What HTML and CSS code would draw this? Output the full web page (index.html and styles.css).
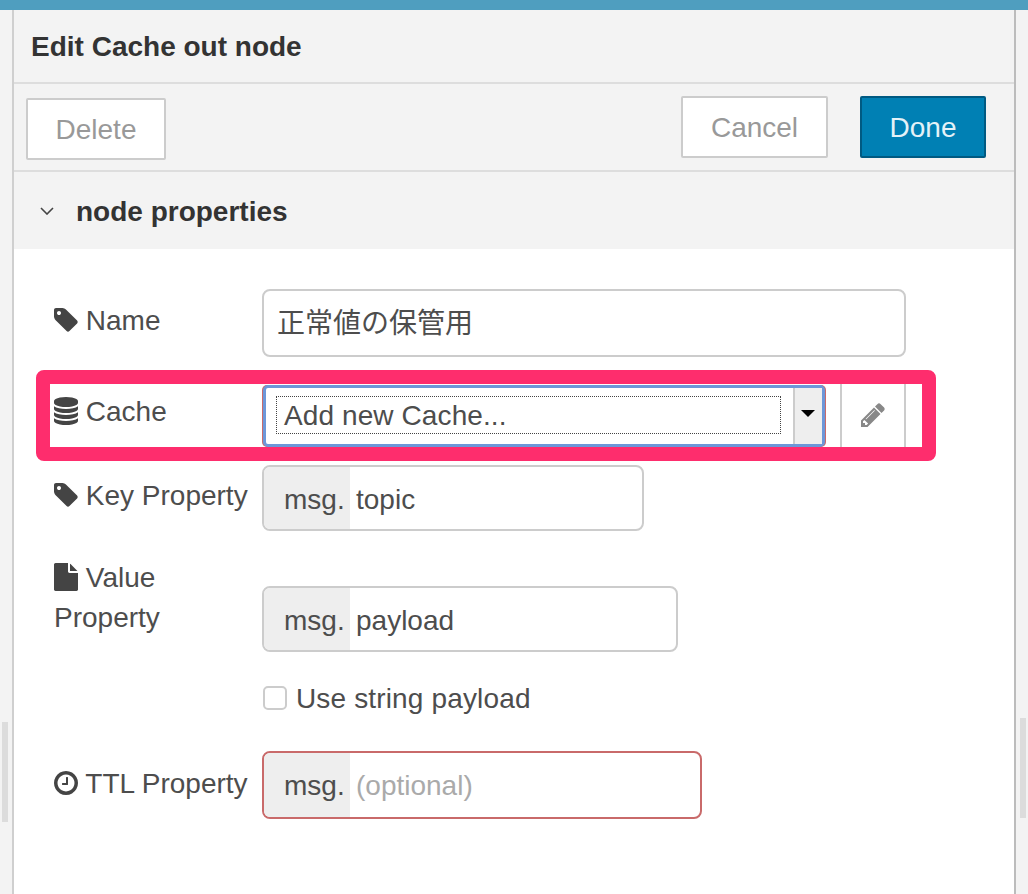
FILE: index.html
```html
<!DOCTYPE html>
<html lang="en">
<head>
    <meta charset="UTF-8">
    <meta name="viewport" content="width=device-width, initial-scale=1.0">
    <title>Edit Cache out node</title>
    <link rel="stylesheet" href="styles.css">
</head>
<body>

    <div class="top-bar"></div>

    <div class="workspace">
        <div class="gutter gutter-left"><div class="thumb"></div></div>

        <main class="tray">
            <!-- Tray header -->
            <header class="tray-title">Edit Cache out node</header>

            <div class="toolbar">
                <button class="btn btn-delete">Delete</button>
                <div class="toolbar-right">
                    <button class="btn">Cancel</button>
                    <button class="btn btn-primary">Done</button>
                </div>
            </div>

            <div class="section-head">
                <svg class="chevron" viewBox="0 0 14 8"><path d="M1 1l6 6 6-6"/></svg>
                <span>node properties</span>
            </div>

            <!-- Form rows -->
            <form class="form">
                <div class="row row-name">
                    <label class="row-label">
                        <svg class="icon" viewBox="0 0 1792 1792"><path d="M576 448q0-53-37.5-90.5t-90.5-37.5-90.5 37.5-37.5 90.5 37.5 90.5 90.5 37.5 90.5-37.5 37.5-90.5zm1067 576q0 53-37 90l-491 492q-39 37-91 37-53 0-90-37l-715-716q-38-37-64.5-101t-26.5-117v-416q0-52 38-90t90-38h416q53 0 117 26.5t102 64.5l715 714q37 39 37 91z"/></svg>
                        Name
                    </label>
                    <div class="field field-name"><span class="field-text field-text-cjk">正常値の保管用</span></div>
                </div>

                <div class="row row-cache">
                    <div class="highlight"></div>
                    <label class="row-label">
                        <svg class="icon" viewBox="0 0 1792 1792"><path d="M896 768q237 0 443-43t325-127v170q0 69-103 128t-280 93.5-385 34.5-385-34.5-280-93.5-103-128v-170q119 84 325 127t443 43zm0 768q237 0 443-43t325-127v170q0 69-103 128t-280 93.5-385 34.5-385-34.5-280-93.5-103-128v-170q119 84 325 127t443 43zm0-384q237 0 443-43t325-127v170q0 69-103 128t-280 93.5-385 34.5-385-34.5-280-93.5-103-128v-170q119 84 325 127t443 43zm0-1152q208 0 385 34.5t280 93.5 103 128v128q0 69-103 128t-280 93.5-385 34.5-385-34.5-280-93.5-103-128v-128q0-69 103-128t280-93.5 385-34.5z"/></svg>
                        Cache
                    </label>
                    <div class="select">
                        <div class="select-value"><span>Add new Cache...</span></div>
                        <div class="select-arrow"></div>
                    </div>
                    <div class="edit-btn">
                        <svg class="icon-pencil" viewBox="0 0 1792 1792"><path d="M491 1536l91-91-235-235-91 91v107h128v128h107zm523-928q0-22-22-22-10 0-17 7l-542 542q-7 7-7 17 0 22 22 22 10 0 17-7l542-542q7-7 7-17zm-54-192l416 416-832 832h-416v-416zm683 96q0 53-37 90l-166 166-416-416 166-165q36-38 90-38 53 0 91 38l235 234q37 39 37 91z"/></svg>
                    </div>
                </div>

                <div class="row row-key">
                    <label class="row-label">
                        <svg class="icon" viewBox="0 0 1792 1792"><path d="M576 448q0-53-37.5-90.5t-90.5-37.5-90.5 37.5-37.5 90.5 37.5 90.5 90.5 37.5 90.5-37.5 37.5-90.5zm1067 576q0 53-37 90l-491 492q-39 37-91 37-53 0-90-37l-715-716q-38-37-64.5-101t-26.5-117v-416q0-52 38-90t90-38h416q53 0 117 26.5t102 64.5l715 714q37 39 37 91z"/></svg>
                        Key Property
                    </label>
                    <div class="field field-key">
                        <span class="prefix">msg.</span>
                        <span class="field-value">topic</span>
                    </div>
                </div>

                <div class="row row-value">
                    <label class="row-label">
                        <svg class="icon" viewBox="0 0 1792 1792"><path d="M1152 512v-472q22 14 36 28l408 408q14 14 28 36h-472zm-128 32q0 40 28 68t68 28h544v1056q0 40-28 68t-68 28h-1344q-40 0-68-28t-28-68v-1600q0-40 28-68t68-28h800v544z"/></svg>
                        Value Property
                    </label>
                    <div class="field field-val">
                        <span class="prefix">msg.</span>
                        <span class="field-value">payload</span>
                    </div>
                </div>

                <div class="check-row">
                    <span class="checkbox"></span>
                    <span class="check-text">Use string payload</span>
                </div>

                <div class="row row-ttl">
                    <label class="row-label">
                        <svg class="icon" viewBox="0 0 1792 1792"><path d="M1024 544v448q0 14-9 23t-23 9h-320q-14 0-23-9t-9-23v-64q0-14 9-23t23-9h224v-352q0-14 9-23t23-9h64q14 0 23 9t9 23zm416 352q0-148-73-273t-198-198-273-73-273 73-198 198-73 273 73 273 198 198 273 73 273-73 198-198 73-273zm224 0q0 209-103 385.5t-279.5 279.5-385.5 103-385.5-103-279.5-279.5-103-385.5 103-385.5 279.5-279.5 385.5-103 385.5 103 279.5 279.5 103 385.5z"/></svg>
                        TTL Property
                    </label>
                    <div class="field field-ttl">
                        <span class="prefix">msg.</span>
                        <span class="field-value field-placeholder">(optional)</span>
                    </div>
                </div>
            </form>
        </main>

        <div class="gutter gutter-right"><div class="thumb"></div></div>
    </div>

</body>
</html>
```

FILE: styles.css
```css
html, body {
    margin: 0;
    padding: 0;
    height: 100%;
    overflow: hidden;
}
body {
    font-family: "Liberation Sans", Arial, sans-serif;
    font-size: 28px;
    color: #4d4d4d;
    background-color: #f3f3f3;
}
.top-bar {
    height: 10px;
    background-color: #4f9ebf;
}
.workspace {
    display: flex;
    height: 884px;
}
.gutter {
    position: relative;
    width: 12px;
    background-color: #f3f3f3;
}
.thumb {
    position: absolute;
    width: 6px;
    height: 100px;
    background-color: #dcdcdc;
}
.gutter-left .thumb {
    left: 2px;
    top: 712px;
}
.gutter-right .thumb {
    right: 2px;
    top: 708px;
}
.tray {
    flex: 1;
    border-left: 2px solid #cfcfcf;
    border-right: 2px solid #bcbcbc;
    background-color: #fff;
}
.tray-title {
    height: 72px;
    line-height: 74px;
    padding-left: 17px;
    font-weight: bold;
    color: #333;
    background-color: #f3f3f3;
    border-bottom: 2px solid #ddd;
}
.toolbar {
    display: flex;
    justify-content: space-between;
    height: 88px;
    padding: 12px 28px 0 12px;
    box-sizing: border-box;
    background-color: #f3f3f3;
    border-bottom: 2px solid #ddd;
}
.toolbar-right {
    display: flex;
    gap: 32px;
}
.btn {
    height: 62px;
    width: 147px;
    font-family: inherit;
    font-size: 28px;
    color: #999;
    background-color: #fff;
    border: 2px solid #ccc;
    border-radius: 2px;
    padding: 2px 0 0;
}
.btn-delete {
    width: 140px;
    margin-top: 2px;
}
.btn-primary {
    width: 126px;
    color: #e4f2f8;
    background-color: #0080b4;
    border-color: #005a82;
}
.section-head {
    display: flex;
    align-items: center;
    height: 77px;
    padding-left: 26px;
    font-weight: bold;
    color: #333;
    background-color: #f3f3f3;
}
.section-head span {
    padding-top: 2px;
}
.chevron {
    width: 14px;
    height: 8px;
    margin-right: 22px;
    margin-top: 1px;
    fill: none;
    stroke: #444;
    stroke-width: 1.6;
}
.form {
    padding: 40px 0 0 40px;
}
.row {
    display: flex;
    align-items: flex-start;
    position: relative;
}
.row-label {
    width: 208px;
    flex-shrink: 0;
    line-height: 40px;
    margin-top: 11px;
}
.icon {
    width: 28px;
    height: 28px;
    fill: #444;
    vertical-align: -4px;
    margin-left: -2px;
    margin-right: -2px;
}
.field {
    display: flex;
    box-sizing: border-box;
    height: 66px;
    line-height: 66px;
    background-color: #fff;
    border: 2px solid #ccc;
    border-radius: 8px;
    overflow: hidden;
}
.field-name {
    width: 644px;
    height: 68px;
}
.field-text {
    padding-left: 13px;
}
.field-text-cjk {
    font-family: "Liberation Sans", "Noto Sans CJK JP", sans-serif;
}
.field-key {
    width: 382px;
}
.field-val {
    width: 416px;
    margin-top: 28px;
}
.field-ttl {
    width: 440px;
    height: 68px;
    border-color: #c96a6a;
}
.prefix {
    width: 86px;
    padding-left: 20px;
    box-sizing: border-box;
    background-color: #eee;
}
.field-value {
    padding-left: 6px;
}
.field-placeholder {
    color: #aaa;
}
.row-name .row-label {
    margin-top: 12px;
}
.row-cache {
    margin-top: 26px;
    height: 66px;
}
.row-cache .row-label {
    margin-top: 9px;
}
.row-key {
    margin-top: 16px;
}
.row-value {
    margin-top: 27px;
}
.row-value .row-label {
    margin-top: 0;
}
.row-ttl {
    margin-top: 35px;
}
.row-ttl .row-label {
    margin-top: 13px;
}
.select {
    display: flex;
    box-sizing: border-box;
    width: 562px;
    height: 62px;
    margin: 2px 0 0 1px;
    letter-spacing: 0.1px;
    background-color: #fff;
    border: 3px solid #6d97d9;
    border-radius: 5px;
    box-shadow: 1px 0 0 #c96a6a, -1px 0 0 #c96a6a;
}
.select-value {
    flex: 1;
    padding: 8px 12px 10px 10px;
}
.select-value span {
    display: block;
    height: 38px;
    line-height: 38px;
    padding-left: 7px;
    border: 1px dotted #444;
    box-sizing: border-box;
}
.select-arrow {
    position: relative;
    width: 27px;
    background-color: #eee;
    border-left: 2px solid #ccc;
}
.select-arrow::after {
    content: "";
    position: absolute;
    left: 6px;
    top: 22px;
    border-left: 7px solid transparent;
    border-right: 7px solid transparent;
    border-top: 7px solid #000;
}
.edit-btn {
    display: flex;
    align-items: center;
    justify-content: center;
    box-sizing: border-box;
    width: 66px;
    height: 70px;
    margin: -2px 0 0 15px;
    background-color: #fff;
    border: 2px solid #ccc;
    border-radius: 2px;
}
.icon-pencil {
    width: 28px;
    height: 28px;
    margin-top: -2px;
    fill: #888;
}
/* pink marker drawn over the screenshot */
.highlight {
    position: absolute;
    left: -18px;
    top: -13px;
    width: 900px;
    height: 91px;
    box-sizing: border-box;
    border: 14px solid #fe2d6d;
    border-radius: 8px;
    z-index: 2;
}
.check-row {
    display: flex;
    align-items: center;
    gap: 9px;
    height: 36px;
    margin: 28px 0 0 209px;
}
.check-text {
    padding-top: 2px;
    letter-spacing: 0.15px;
}
.checkbox {
    box-sizing: border-box;
    width: 24px;
    height: 24px;
    background-color: #fff;
    border: 2px solid #ccc;
    border-radius: 5px;
}
```
